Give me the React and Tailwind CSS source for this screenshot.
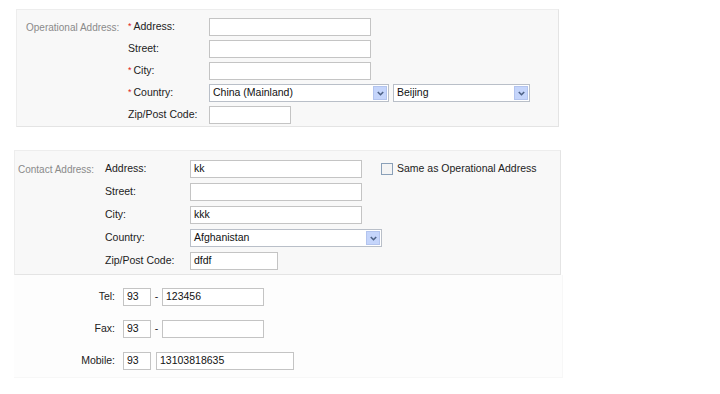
import React from 'react';

const font = { fontFamily: '"Liberation Sans", Arial, sans-serif' };

const Input = ({ value = '', w }) => (
  <div className={`h-[18px] ${w} border border-[#c4c4c4] bg-white flex items-center px-[3px] text-[10.5px] text-[#111]`}>
    {value}
  </div>
);

const Select = ({ value, w }) => (
  <div className={`h-[18px] ${w} border border-[#b9bfc8] bg-white flex items-center text-[10.5px] text-[#111]`}>
    <span className="flex-1 pl-[3px]">{value}</span>
    <span className="w-[14px] h-[14px] mr-[1px] bg-[#c5d5fb] border border-[#b3c4ee] flex items-center justify-center">
      <svg width="7" height="5" viewBox="0 0 7 5">
        <path d="M0.8 1 L3.5 3.7 L6.2 1" stroke="#4d6185" strokeWidth="1.6" fill="none" />
      </svg>
    </span>
  </div>
);

const Label = ({ req, children, w }) => (
  <div className={`${w} text-[10.5px] text-[#222] flex items-center`}>
    {req && <span className="text-[#e02020] mr-[2px] text-[9px]">*</span>}
    {children}
  </div>
);

const Row = ({ children }) => <div className="flex items-center h-[18px]">{children}</div>;

export default function App() {
  return (
    <div className="w-[720px] h-[394px] bg-white overflow-hidden" style={font}>
      {/* Operational address */}
      <div className="ml-[16px] mt-[9px] w-[543px] h-[118px] bg-[#f8f8f8] border border-[#ededed] border-r-[#e4e4e4] border-b-[#e4e4e4] flex pt-[8px] pl-[9px]">
        <div className="w-[102px] h-[18px] flex items-center text-[10px] text-[#8a8a8a]">Operational Address:</div>
        <div className="flex flex-col gap-[4px]">
          <Row>
            <Label req w="w-[81px]">Address:</Label>
            <Input w="w-[162px]" />
          </Row>
          <Row>
            <Label w="w-[81px]">Street:</Label>
            <Input w="w-[162px]" />
          </Row>
          <Row>
            <Label req w="w-[81px]">City:</Label>
            <Input w="w-[162px]" />
          </Row>
          <Row>
            <Label req w="w-[81px]">Country:</Label>
            <Select w="w-[180px]" value="China (Mainland)" />
            <div className="w-[4px]" />
            <Select w="w-[137px]" value="Beijing" />
          </Row>
          <Row>
            <Label w="w-[81px]">Zip/Post Code:</Label>
            <Input w="w-[82px]" />
          </Row>
        </div>
      </div>

      {/* Contact address */}
      <div className="ml-[14px] mt-[23px] w-[547px] h-[125px] bg-[#f8f8f8] border border-[#ededed] border-r-[#e4e4e4] border-b-[#e4e4e4] flex pt-[9px] pl-[3px]">
        <div className="w-[87px] h-[18px] flex items-center text-[10px] text-[#8a8a8a]">Contact Address:</div>
        <div className="flex flex-col gap-[5px]">
          <Row>
            <Label w="w-[85px]">Address:</Label>
            <Input w="w-[172px]" value="kk" />
            <div className="ml-[19px] flex items-center gap-[4px]">
              <span className="w-[12px] h-[12px] border border-[#8aa0b8] bg-[#f4f4f4]" />
              <span className="text-[10.5px] text-[#222]">Same as Operational Address</span>
            </div>
          </Row>
          <Row>
            <Label w="w-[85px]">Street:</Label>
            <Input w="w-[172px]" />
          </Row>
          <Row>
            <Label w="w-[85px]">City:</Label>
            <Input w="w-[172px]" value="kkk" />
          </Row>
          <Row>
            <Label w="w-[85px]">Country:</Label>
            <Select w="w-[192px]" value="Afghanistan" />
          </Row>
          <Row>
            <Label w="w-[85px]">Zip/Post Code:</Label>
            <Input w="w-[88px]" value="dfdf" />
          </Row>
        </div>
      </div>

      {/* Phones */}
      <div className="ml-[14px] w-[549px] h-[103px] bg-[#fdfdfd] border-r border-b border-[#f7f7f7] flex flex-col gap-[14px] pt-[13px]">
        <Row>
          <div className="w-[101px] text-right text-[10.5px] text-[#222]">Tel:</div>
          <div className="w-[8px]" />
          <Input w="w-[28px]" value="93" />
          <span className="w-[11px] text-center text-[10.5px] text-[#222]">-</span>
          <Input w="w-[102px]" value="123456" />
        </Row>
        <Row>
          <div className="w-[101px] text-right text-[10.5px] text-[#222]">Fax:</div>
          <div className="w-[8px]" />
          <Input w="w-[28px]" value="93" />
          <span className="w-[11px] text-center text-[10.5px] text-[#222]">-</span>
          <Input w="w-[102px]" />
        </Row>
        <Row>
          <div className="w-[101px] text-right text-[10.5px] text-[#222]">Mobile:</div>
          <div className="w-[8px]" />
          <Input w="w-[28px]" value="93" />
          <div className="w-[5px]" />
          <Input w="w-[138px]" value="13103818635" />
        </Row>
      </div>
    </div>
  );
}
